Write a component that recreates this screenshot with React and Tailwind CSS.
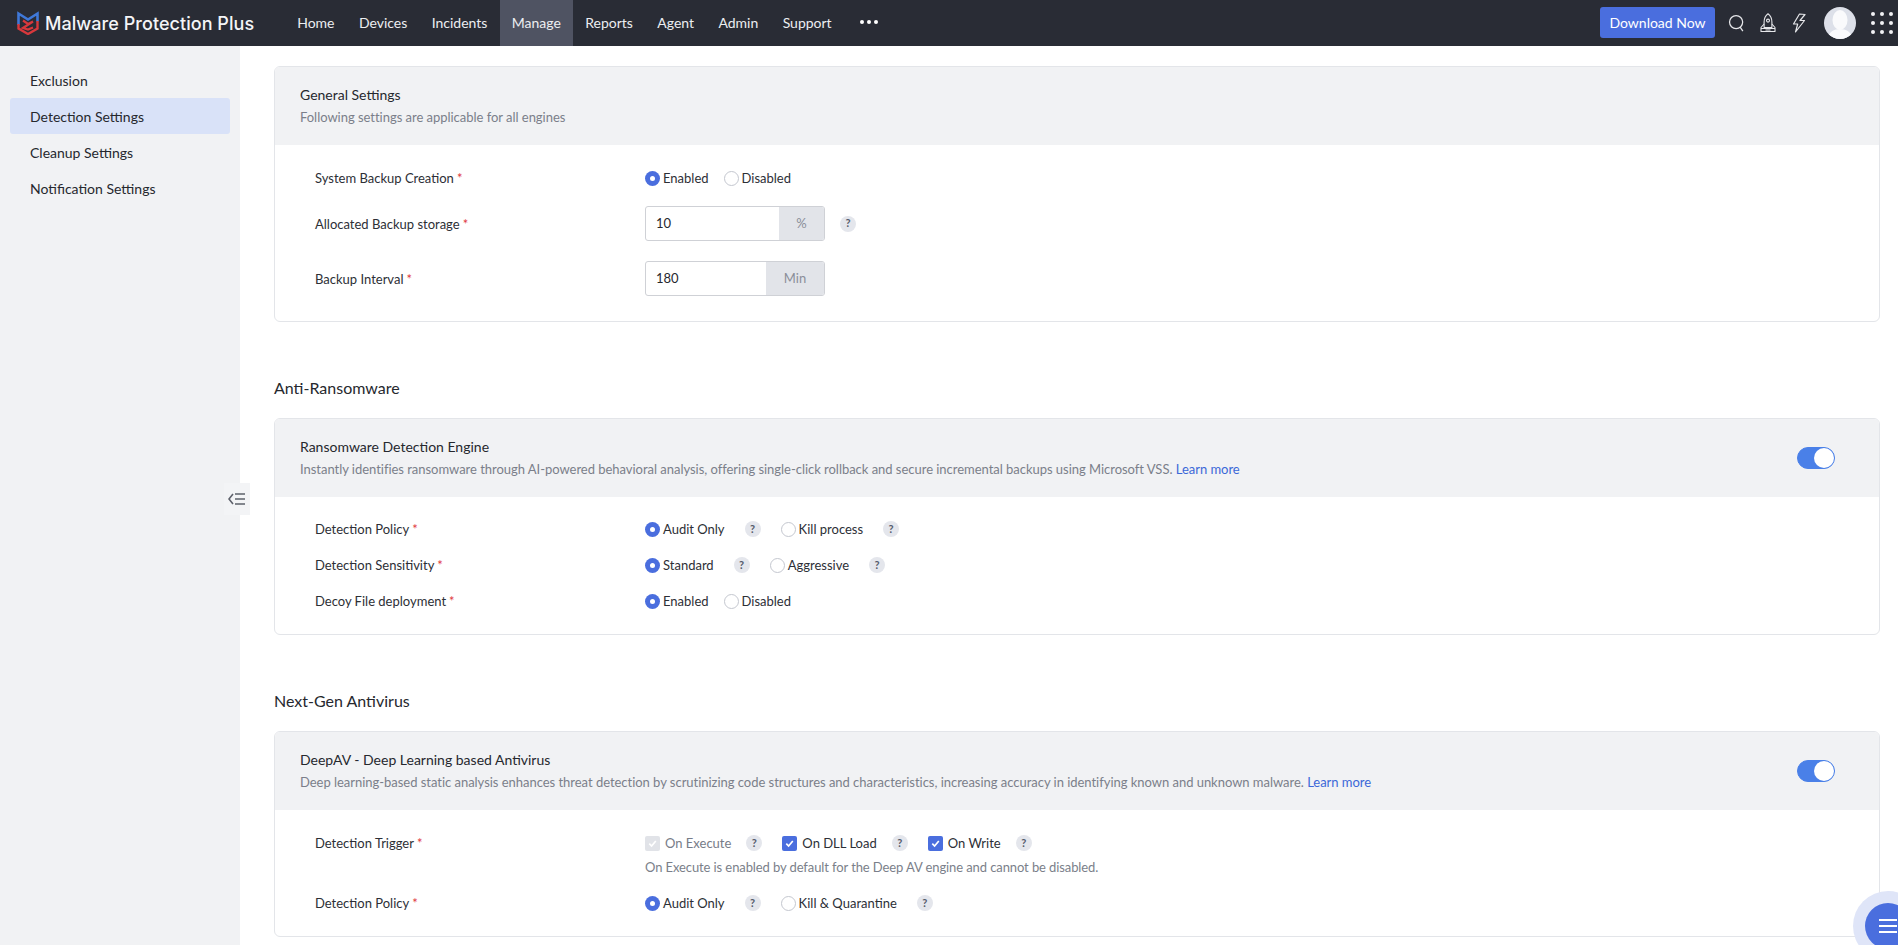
import React from "react";

const Help = ({ cls = "" }) => (
  <span className={`inline-flex h-4 w-4 shrink-0 items-center justify-center rounded-full bg-[#e4e6ec] text-[11px] font-bold text-[#555b6b] ${cls}`}>?</span>
);

const Radio = ({ on, label, cls = "" }) => (
  <span className={`inline-flex items-center ${cls}`}>
    {on ? (
      <span className="flex h-[15px] w-[15px] items-center justify-center rounded-full bg-[#4a6ede]">
        <span className="h-[5px] w-[5px] rounded-full bg-white" />
      </span>
    ) : (
      <span className="h-[15px] w-[15px] rounded-full border border-[#c4c7cf] bg-white" />
    )}
    <span className="ml-[3px] pt-[2px] text-[#2d2f36]">{label}</span>
  </span>
);

const Check = ({ disabled, label, cls = "" }) => (
  <span className={`inline-flex items-center ${cls}`}>
    <span className={`flex h-[15px] w-[15px] items-center justify-center rounded-[2px] ${disabled ? "bg-[#e1e3e8]" : "bg-[#4a6ede]"}`}>
      <svg viewBox="0 0 12 12" className="h-[11px] w-[11px]" fill="none" stroke="white" strokeWidth="1.8">
        <path d="M2.5 6.2 5 8.8 9.6 3.2" />
      </svg>
    </span>
    <span className={`ml-[5px] pt-[2px] ${disabled ? "text-[#777c88]" : "text-[#2d2f36]"}`}>{label}</span>
  </span>
);

const Label = ({ children }) => (
  <div className="w-[330px] shrink-0 pt-[2px] text-[#2d2f36]">
    {children}
    <span className="ml-[3px] text-[13px] leading-none text-[#e0393e]">*</span>
  </div>
);

const Row = ({ label, children, cls = "h-[36px]" }) => (
  <div className={`flex items-center pl-10 ${cls}`}>
    <Label>{label}</Label>
    <div className="flex items-center">{children}</div>
  </div>
);

const Toggle = () => (
  <span className="flex h-[22px] w-[38px] items-center justify-end rounded-full border border-[#4a80e8] bg-[#4a80e8]">
    <span className="h-5 w-5 rounded-full bg-white" />
  </span>
);

const CardHeader = ({ title, desc, link, toggle }) => (
  <div className="flex h-[78px] items-center justify-between rounded-t-[5px] bg-[#f1f2f4] pl-[25px] pr-[44px]">
    <div>
      <div className="text-[14px] leading-[20px] text-[#26282e]">{title}</div>
      <div className="mt-[2px] text-[13px] leading-[20px] tracking-[-0.03px] text-[#7b7f8a]">
        {desc} {link && <span className="text-[#3b68d8]">{link}</span>}
      </div>
    </div>
    {toggle && <Toggle />}
  </div>
);

const UnitInput = ({ value, unit, unitW }) => (
  <div className="flex h-[35px] w-[180px] overflow-hidden rounded-[3px] border border-[#cfd1d6]">
    <div className="flex flex-1 items-center pl-[10px] text-[13px] text-[#26282e]">{value}</div>
    <div className={`flex items-center justify-center bg-[#e2e4e9] text-[#8a8e99] ${unitW}`}>{unit}</div>
  </div>
);

const nav = ["Home", "Devices", "Incidents", "Manage", "Reports", "Agent", "Admin", "Support"];

const Logo = () => (
  <svg viewBox="0 0 22 24" className="h-[24px] w-[22px]" fill="none">
    <path d="M1.5 14V2.5l9.500 6 9.500-6v8" stroke="#3f78d8" strokeWidth="2.6" />
    <path d="M6 9.500 11 13l5-2.500L6 17l5 1.500 5-2" stroke="#d8383c" strokeWidth="2.2" />
    <path d="M1.500 13v4.500L11 23l9.500-5.500V10" stroke="#d8383c" strokeWidth="2.4" />
  </svg>
);

const Rocket = () => (
  <svg viewBox="0 0 16 20" className="h-[20px] w-[16px]" fill="none" stroke="#e6e7ea" strokeWidth="1.1" strokeLinejoin="round">
    <path d="M8 .8c2.600 2 3.900 5 3.900 8.200v5.500H4.100V9C4.100 5.800 5.400 2.800 8 .8Z" />
    <circle cx="8" cy="7.600" r="1.500" />
    <path d="M4.100 11 1 14.500v4h14v-4L11.900 11" />
    <path d="M1 15.500h14M5.500 17h5" />
  </svg>
);

const Zap = () => (
  <svg viewBox="0 0 14 20" className="h-[20px] w-[14px]" fill="none" stroke="#e6e7ea" strokeWidth="1.2" strokeLinejoin="round">
    <path d="M7.500 1 1.500 11h4.200L3.500 19 12.500 7.500H8L13 1.500Z" />
  </svg>
);

const Avatar = () => (
  <span className="flex h-[32px] w-[32px] overflow-hidden rounded-full">
    <svg viewBox="0 0 32 32" className="h-[32px] w-[32px]">
      <rect width="32" height="32" fill="#dde0e9" />
      <ellipse cx="16" cy="13" rx="7.500" ry="10" fill="#fafafc" />
      <path d="M3 33c1-8 7-11 13-11s12 3 13 11Z" fill="#fafafc" />
    </svg>
  </span>
);

const Grid = () => (
  <span className="grid grid-cols-3 gap-x-[5px] gap-y-[5px]">
    {Array.from({ length: 9 }).map((_, i) => (
      <span key={i} className="h-[4px] w-[4px] rounded-full bg-[#f2f3f5]" />
    ))}
  </span>
);

export default function App() {
  return (
    <div className="relative h-screen overflow-hidden bg-white font-[Lato,sans-serif] text-[13px]">
      <header className="flex h-[46px] items-center bg-[#292c35] text-white">
        <div className="ml-[17px] flex w-[268px] shrink-0 items-center">
          <Logo />
          <span className="ml-[6px] font-[Inter,sans-serif] text-[18px] font-medium tracking-[0.05px] text-[#f4f5f7]">Malware Protection Plus</span>
        </div>
        <nav className="flex h-full items-center text-[14px] text-[#eceef1]">
          {nav.map((n) => (
            <span key={n} className={`flex h-full items-center px-[12.2px] pb-[2px] ${n === "Manage" ? "bg-[#4f5362]" : ""}`}>{n}</span>
          ))}
          <span className="mb-[2px] ml-[16px] flex gap-[3px]">
            <span className="h-[4px] w-[4px] rounded-full bg-white" />
            <span className="h-[4px] w-[4px] rounded-full bg-white" />
            <span className="h-[4px] w-[4px] rounded-full bg-white" />
          </span>
        </nav>
        <div className="mb-[1px] ml-auto flex items-center pr-[5px]">
          <button className="flex h-[31px] w-[115px] items-center justify-center rounded-[3px] bg-[#4a6ede] text-[14px] text-white">Download Now</button>
          <svg viewBox="0 0 20 20" className="ml-[13px] h-[20px] w-[18px]" fill="none" stroke="#e6e7ea" strokeWidth="1.4">
            <circle cx="9" cy="9" r="7.300" />
            <path d="M13.500 14.500 16.500 19" />
          </svg>
          <span className="ml-[14px] flex"><Rocket /></span>
          <span className="ml-[16px] flex"><Zap /></span>
          <span className="ml-[18px] flex"><Avatar /></span>
          <span className="ml-[15px] flex"><Grid /></span>
        </div>
      </header>

      <div className="flex h-[899px]">
        <aside className="w-[240px] shrink-0 bg-[#f1f2f4] px-[10px] pt-[16px] text-[14px] text-[#26282e]">
          {["Exclusion", "Detection Settings", "Cleanup Settings", "Notification Settings"].map((s) => (
            <div key={s} className={`flex h-[36px] items-center rounded-[3px] pl-[20px] ${s === "Detection Settings" ? "bg-[#d9e2f8]" : ""}`}>{s}</div>
          ))}
        </aside>

        <main className="flex-1 pl-[34px] pr-[18px] pt-[20px]">
          <section className="rounded-[6px] border border-[#e3e5e9]">
            <CardHeader title="General Settings" desc="Following settings are applicable for all engines" />
            <div className="pb-[25px] pt-[19px]">
              <Row label="System Backup Creation" cls="h-[28px]">
                <Radio on label="Enabled" />
                <Radio label="Disabled" cls="ml-[15px]" />
              </Row>
              <Row label="Allocated Backup storage" cls="mt-[14px] h-[35px]">
                <UnitInput value="10" unit="%" unitW="w-[45px]" />
                <Help cls="ml-[15px]" />
              </Row>
              <Row label="Backup Interval" cls="mt-[20px] h-[35px]">
                <UnitInput value="180" unit="Min" unitW="w-[58px]" />
              </Row>
            </div>
          </section>

          <h2 className="mt-[55px] text-[16px] leading-[22px] text-[#26282e]">Anti-Ransomware</h2>
          <section className="mt-[19px] rounded-[6px] border border-[#e3e5e9]">
            <CardHeader
              toggle
              title="Ransomware Detection Engine"
              desc="Instantly identifies ransomware through AI-powered behavioral analysis, offering single-click rollback and secure incremental backups using Microsoft VSS."
              link="Learn more"
            />
            <div className="pb-[15px] pt-[14px]">
              <Row label="Detection Policy">
                <Radio on label="Audit Only" />
                <Help cls="ml-[20px]" />
                <Radio label="Kill process" cls="ml-[20px]" />
                <Help cls="ml-[20px]" />
              </Row>
              <Row label="Detection Sensitivity">
                <Radio on label="Standard" />
                <Help cls="ml-[20px]" />
                <Radio label="Aggressive" cls="ml-[20px]" />
                <Help cls="ml-[20px]" />
              </Row>
              <Row label="Decoy File deployment">
                <Radio on label="Enabled" />
                <Radio label="Disabled" cls="ml-[15px]" />
              </Row>
            </div>
          </section>

          <h2 className="mt-[55px] text-[16px] leading-[22px] text-[#26282e]">Next-Gen Antivirus</h2>
          <section className="mt-[19px] rounded-[6px] border border-[#e3e5e9]">
            <CardHeader
              toggle
              title="DeepAV - Deep Learning based Antivirus"
              desc="Deep learning-based static analysis enhances threat detection by scrutinizing code structures and characteristics, increasing accuracy in identifying known and unknown malware."
              link="Learn more"
            />
            <div className="pb-[19px] pt-[19px]">
              <Row label="Detection Trigger" cls="h-[28px]">
                <Check disabled label="On Execute" />
                <Help cls="ml-[15px]" />
                <Check label="On DLL Load" cls="ml-[20px]" />
                <Help cls="ml-[15px]" />
                <Check label="On Write" cls="ml-[20px]" />
                <Help cls="ml-[15px]" />
              </Row>
              <div className="mt-[1px] flex h-[18px] pl-10">
                <div className="w-[330px] shrink-0" />
                <div className="tracking-[-0.1px] text-[#7b7f8a]">On Execute is enabled by default for the Deep AV engine and cannot be disabled.</div>
              </div>
              <Row label="Detection Policy" cls="mt-[13px] h-[28px]">
                <Radio on label="Audit Only" />
                <Help cls="ml-[20px]" />
                <Radio label="Kill & Quarantine" cls="ml-[20px]" />
                <Help cls="ml-[20px]" />
              </Row>
            </div>
          </section>
        </main>
      </div>

      <div className="absolute left-[224px] top-[483px] flex h-[32px] w-[26px] items-center justify-center bg-[#f3f4f6]">
        <svg viewBox="0 0 18 14" className="h-[14px] w-[18px]" fill="none" stroke="#5e616b" strokeWidth="1.6">
          <path d="M5 2 1 7l4 5" />
          <path d="M7 2h10M7 7h10M7 12h10" />
        </svg>
      </div>

      <div className="absolute left-[1853px] top-[891px] flex h-[70px] w-[70px] items-center justify-center rounded-full bg-[#dfe5f8]">
        <div className="flex h-[46px] w-[46px] flex-col items-center justify-center gap-[4px] rounded-full bg-[#4a6ede]">
          <span className="h-[2px] w-[18px] bg-white" />
          <span className="h-[2px] w-[18px] bg-white" />
          <span className="h-[2px] w-[18px] bg-white" />
        </div>
      </div>
    </div>
  );
}
